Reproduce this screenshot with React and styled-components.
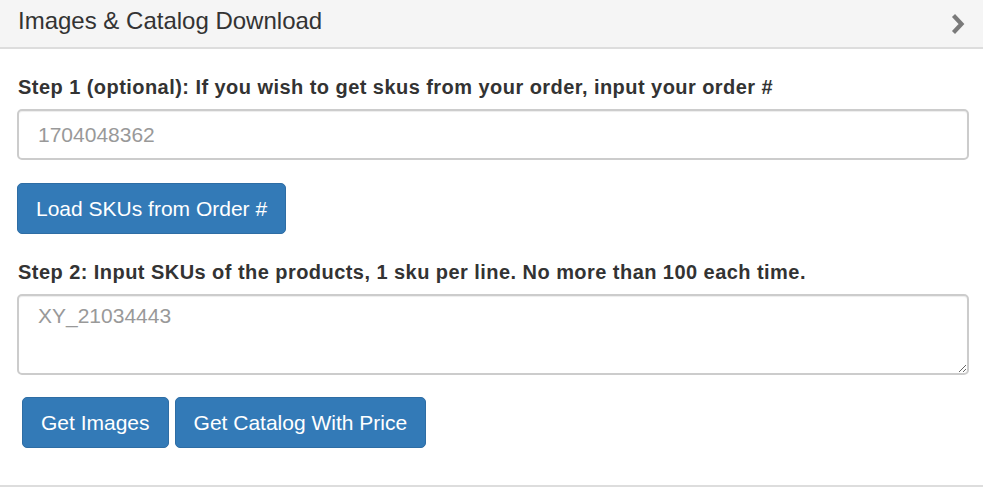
import React from "react";
import styled, { createGlobalStyle } from "styled-components";

const GlobalStyle = createGlobalStyle`
  html, body {
    margin: 0;
    padding: 0;
    background: #fff;
  }
  body {
    font-family: "Liberation Sans", Arial, sans-serif;
    color: #333;
  }
`;

const Panel = styled.div`
  width: 983px;
  border-bottom: 2px solid #ddd;
`;

const Header = styled.div`
  display: flex;
  align-items: center;
  justify-content: space-between;
  height: 49px;
  padding: 0 18px 0 18px;
  box-sizing: border-box;
  background: #f5f5f5;
  border-bottom: 2px solid #ddd;
`;

const Title = styled.h3`
  margin: 0;
  padding-bottom: 6px;
  font-size: 24px;
  line-height: 28px;
  font-weight: normal;
  color: #333;
`;

const Body = styled.div`
  padding: 26px 14px 37px 17px;
`;

const Label = styled.label`
  display: block;
  margin: 0 0 10px 1px;
  font-size: 20px;
  line-height: 24px;
  font-weight: bold;
  letter-spacing: 0.45px;
  color: #333;
`;

const fieldStyles = `
  display: block;
  width: 100%;
  box-sizing: border-box;
  font-family: inherit;
  font-size: 21px;
  color: #555;
  border: 2px solid #ccc;
  border-radius: 5px;
  box-shadow: inset 0 1px 1px rgba(0, 0, 0, 0.075);
  outline: none;
  &::placeholder {
    color: #999;
  }
`;

const TextInput = styled.input`
  ${fieldStyles}
  height: 51px;
  padding: 0 19px;
`;

const TextArea = styled.textarea`
  ${fieldStyles}
  height: 81px;
  padding: 8px 19px;
`;

const Button = styled.button`
  height: 51px;
  padding: 0 18px;
  font-family: inherit;
  font-size: 21px;
  color: #fff;
  background: #337ab7;
  border: 1px solid #2e6da4;
  border-radius: 5px;
  cursor: pointer;
`;

const Step = styled.div`
  margin-bottom: ${(p) => p.$gap || 0}px;
`;

const ButtonRow = styled.div`
  display: flex;
  gap: 6px;
  padding-left: ${(p) => p.$indent || 0}px;
`;

const Chevron = () => (
  <svg width="14" height="22" viewBox="0 0 14 22">
    <path d="M2.5 2.5 L10.5 11 L2.5 19.5" fill="none" stroke="#7a7a7a" strokeWidth="4.2" />
  </svg>
);

export default function App() {
  return (
    <>
      <GlobalStyle />
      <Panel>
        <Header>
          <Title>Images &amp; Catalog Download</Title>
          <Chevron />
        </Header>
        <Body>
          <Step $gap={23}>
            <Label>
              Step 1 (optional): If you wish to get skus from your order, input
              your order #
            </Label>
            <TextInput placeholder="1704048362" />
          </Step>
          <Step $gap={26}>
            <Button>Load SKUs from Order #</Button>
          </Step>
          <Step $gap={22}>
            <Label>
              Step 2: Input SKUs of the products, 1 sku per line. No more than
              100 each time.
            </Label>
            <TextArea placeholder="XY_21034443" />
          </Step>
          <ButtonRow $indent={5}>
            <Button>Get Images</Button>
            <Button>Get Catalog With Price</Button>
          </ButtonRow>
        </Body>
      </Panel>
    </>
  );
}
